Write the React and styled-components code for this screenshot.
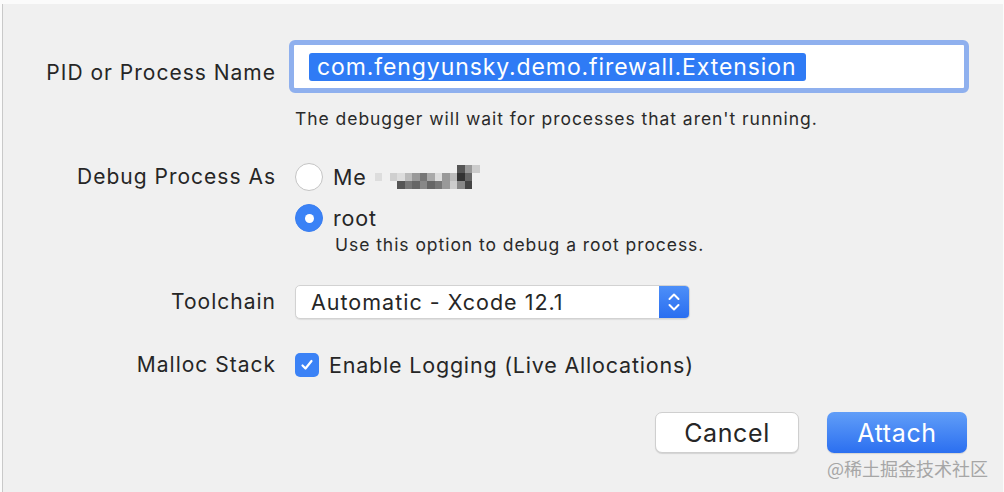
import React from "react";
import styled, { createGlobalStyle } from "styled-components";

const GlobalStyle = createGlobalStyle`
  html, body {
    margin: 0;
    padding: 0;
    background: #fbfbfb;
  }
  body {
    font-family: Inter, "Noto Sans", "Liberation Sans", sans-serif;
    color: #262626;
  }
`;

const Window = styled.div`
  width: 1001px;
  height: 488px;
  margin: 4px 0 0 2px;
  background: #f0f0f0;
  border-left: 1px solid #c9c9c9;
  box-sizing: border-box;
  position: relative;
  overflow: hidden;
`;

const Form = styled.div`
  display: grid;
  grid-template-columns: 272px 1fr;
  column-gap: 20px;
  padding-top: 36px;
`;

const Label = styled.div`
  text-align: right;
  font-size: 21px;
  letter-spacing: 1px;
  margin-right: -1px;
  height: ${(p) => p.h || 30}px;
  line-height: ${(p) => p.h || 30}px;
  margin-top: ${(p) => p.mt || 0}px;
  white-space: nowrap;
`;

const Cell = styled.div`
  display: flex;
  flex-direction: column;
  align-items: flex-start;
  margin-top: ${(p) => p.mt || 0}px;
`;

const FocusRing = styled.div`
  width: 680px;
  height: 53px;
  box-sizing: border-box;
  border: 5px solid #8fb0ee;
  border-radius: 6px;
  margin-left: -6px;
  background: #fff;
  display: flex;
  align-items: center;
  padding-left: 15px;
`;

const Selected = styled.span`
  background: #2f7bf5;
  color: #fff;
  font-size: 23px;
  letter-spacing: 0.9px;
  border-radius: 3px;
  padding: 0 10px 0 8px;
  height: 28px;
  line-height: 28px;
  white-space: nowrap;
`;

const Hint = styled.div`
  font-size: 17.5px;
  letter-spacing: 0.95px;
  margin-top: ${(p) => p.mt || 0}px;
  margin-left: ${(p) => p.ml || 0}px;
  color: #2a2a2a;
  white-space: nowrap;
`;

const OptionRow = styled.div`
  display: flex;
  align-items: center;
  gap: 10px;
  height: ${(p) => p.h || 30}px;
  margin-top: ${(p) => p.mt || 0}px;
  font-size: 21.5px;
  letter-spacing: 0.8px;
  white-space: nowrap;
`;

const Radio = styled.span`
  width: 28px;
  height: 28px;
  box-sizing: border-box;
  border-radius: 50%;
  background: ${(p) => (p.on ? "#3a82f6" : "#fff")};
  border: 1px solid ${(p) => (p.on ? "#3a7ef0" : "#c4c4c4")};
  display: flex;
  align-items: center;
  justify-content: center;
  &::after {
    content: "";
    display: ${(p) => (p.on ? "block" : "none")};
    width: 9px;
    height: 9px;
    border-radius: 50%;
    background: #fff;
  }
`;

const Pixels = styled.div`
  display: grid;
  grid-template-columns: repeat(14, 7.5px);
  grid-template-rows: repeat(3, 8px);
  margin-left: -2px;
`;

const Px = styled.span`
  background: ${(p) => p.c};
`;

const Popup = styled.div`
  width: 395px;
  height: 34px;
  box-sizing: border-box;
  background: #fff;
  border: 1px solid #d2d2d2;
  border-radius: 5px;
  box-shadow: 0 1px 1px rgba(0, 0, 0, 0.08);
  display: flex;
  align-items: center;
  justify-content: space-between;
  overflow: hidden;
  font-size: 21.5px;
  letter-spacing: 1px;
`;

const PopupText = styled.span`
  padding-left: 15px;
`;

const Stepper = styled.div`
  width: 30px;
  height: 100%;
  background: linear-gradient(#4d8ff8, #2a6ef0);
  display: flex;
  align-items: center;
  justify-content: center;
`;

const Check = styled.span`
  width: 24px;
  height: 24px;
  border-radius: 5px;
  background: #3b82f6;
  display: flex;
  align-items: center;
  justify-content: center;
`;

const Buttons = styled.div`
  display: flex;
  justify-content: flex-end;
  gap: 28px;
  padding-right: 36px;
  margin-top: 32px;
`;

const Button = styled.button`
  width: ${(p) => p.w}px;
  height: 41px;
  border-radius: 7px;
  font-family: inherit;
  font-size: 25px;
  letter-spacing: 0.6px;
  cursor: pointer;
  box-sizing: border-box;
  border: ${(p) => (p.primary ? "none" : "1px solid #cfcfcf")};
  background: ${(p) =>
    p.primary ? "linear-gradient(#619ef8, #2b6ff0)" : "#fff"};
  color: ${(p) => (p.primary ? "#fff" : "#262626")};
  box-shadow: 0 1px 1px rgba(0, 0, 0, 0.12);
`;

const Watermark = styled.div`
  position: absolute;
  right: 15px;
  bottom: 14px;
  font-size: 18px;
  line-height: 20px;
  color: #a6a6a6;
  font-family: "Noto Sans CJK SC", "Noto Sans", sans-serif;
`;

const blur = [
  "#f0f0f0 #f0f0f0 #f0f0f0 #f0f0f0 #f0f0f0 #f0f0f0 #f0f0f0 #f0f0f0 #f0f0f0 #f0f0f0 #f0f0f0 #555 #999 #ccc",
  "#ddd #f0f0f0 #cfcfcf #ddd #bbb #999 #777 #aaa #ddd #999 #bbb #333 #666 #f0f0f0",
  "#f0f0f0 #f0f0f0 #f0f0f0 #555 #777 #666 #888 #666 #777 #999 #ccc #888 #444 #f0f0f0",
].map((r) => r.split(" "));

export default function App() {
  return (
    <>
      <GlobalStyle />
      <Window>
        <Form>
          <Label h={53} mt={6}>PID or Process Name</Label>
          <Cell>
            <FocusRing>
              <Selected>com.fengyunsky.demo.firewall.Extension</Selected>
            </FocusRing>
            <Hint mt={15}>The debugger will wait for processes that aren't running.</Hint>
          </Cell>

          <Label mt={33}>Debug Process As</Label>
          <Cell mt={33}>
            <OptionRow>
              <Radio />
              <span>Me</span>
              <Pixels>
                {blur.flatMap((row, i) =>
                  row.map((c, j) => <Px key={i + "-" + j} c={c} />)
                )}
              </Pixels>
            </OptionRow>
            <OptionRow mt={11}>
              <Radio on />
              <span>root</span>
            </OptionRow>
            <Hint ml={40} mt={1}>Use this option to debug a root process.</Hint>
          </Cell>

          <Label h={34} mt={30}>Toolchain</Label>
          <Cell mt={30}>
            <Popup>
              <PopupText>Automatic - Xcode 12.1</PopupText>
              <Stepper>
                <svg width="14" height="24" viewBox="0 0 14 24" fill="none" stroke="#fff" strokeWidth="2" strokeLinecap="round" strokeLinejoin="round">
                  <path d="M2.5 9 L7 4.5 L11.5 9" />
                  <path d="M2.5 15 L7 19.5 L11.5 15" />
                </svg>
              </Stepper>
            </Popup>
          </Cell>

          <Label mt={31}>Malloc Stack</Label>
          <Cell mt={31}>
            <OptionRow>
              <Check>
                <svg width="16" height="16" viewBox="0 0 16 16" fill="none" stroke="#fff" strokeWidth="2.2" strokeLinecap="round" strokeLinejoin="round">
                  <path d="M3.5 8.5 L6.5 11.5 L12.5 4" />
                </svg>
              </Check>
              <span>Enable Logging (Live Allocations)</span>
            </OptionRow>
          </Cell>
        </Form>

        <Buttons>
          <Button w={144}>Cancel</Button>
          <Button w={140} primary>Attach</Button>
        </Buttons>
        <Watermark>@稀土掘金技术社区</Watermark>
      </Window>
    </>
  );
}
